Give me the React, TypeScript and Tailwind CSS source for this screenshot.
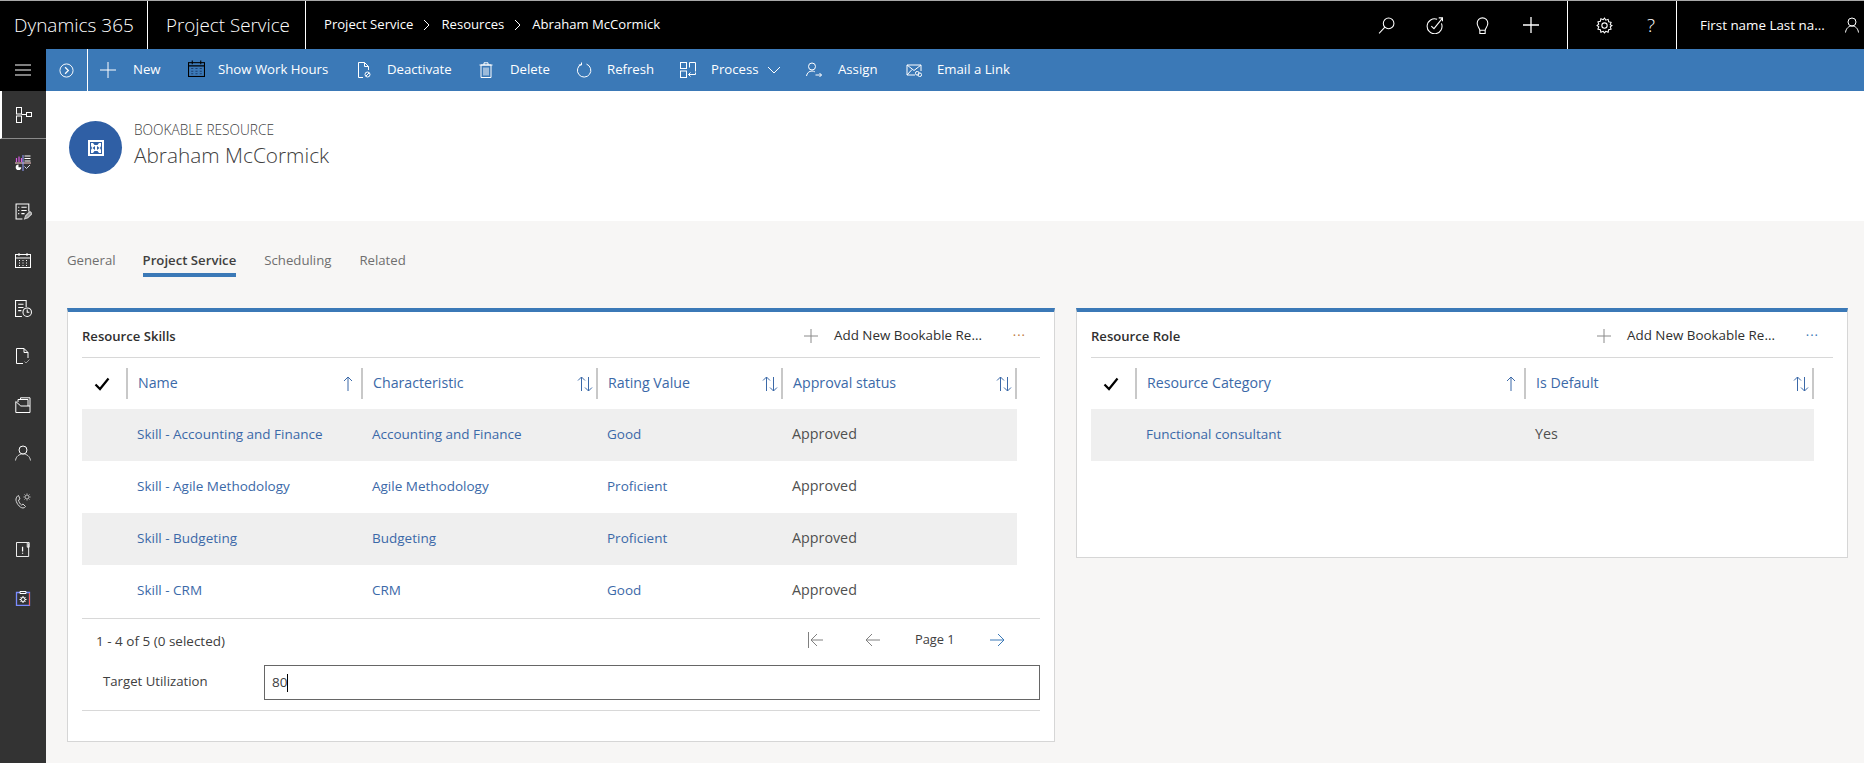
import type { ReactNode } from 'react';

function Svg({ size = 16, className = '', children }: { size?: number; className?: string; children: ReactNode }) {
  return (
    <svg width={size} height={size} viewBox="0 0 16 16" fill="none" stroke="currentColor" strokeWidth="1" className={className}>
      {children}
    </svg>
  );
}

const sideIcons: ReactNode[] = [
  <Svg><rect x="0.5" y="0.5" width="5" height="6.5" /><rect x="0.5" y="9" width="5" height="6.5" /><rect x="10.5" y="5.5" width="5" height="4" /><path d="M5.500 7.500h5" /></Svg>,
  <Svg>
    <path d="M1.500 3v4M4 1.500V7M6.500 3v4" stroke="#d65be0" strokeWidth="1.200" />
    <path d="M9.500 1h6M9.500 3.500h6M9.500 6h6" />
    <path d="M0 8h16" stroke="#ffd0d0" />
    <path d="M8 0v16" stroke="#8f9cff" />
    <path d="M3.500 9.500a2.800 2.800 0 1 0 2.800 2.800H3.500z" fill="currentColor" stroke="none" />
    <path d="M9.500 11.500l2 2 3.500-3.500" stroke="#cfd6e6" />
  </Svg>,
  <Svg size={17}><path d="M7 15H1V1h12v7" /><path d="M3 4h1M6 4h5M3 7h1M6 7h5M3 10h1M6 10h3" /><path d="M9 15l1-3 4-4 2 2-4 4z" fill="#999" stroke="#ccc" /></Svg>,
  <Svg><rect x="0.5" y="2.5" width="15" height="13" /><path d="M0.5 6h15M4 1v3M12 1v3" /><path d="M4 8.500h1M7.500 8.500h1M11 8.500h1M4 11h1M7.500 11h1M11 11h1M4 13.500h1M7.500 13.500h1M11 13.500h1" /></Svg>,
  <Svg size={17}><path d="M6.500 15.500H.5V.5h10v6" /><path d="M3 4h5M3 7h5M3 10h3" /><circle cx="11.500" cy="11.500" r="4" /><path d="M11.500 9v2.500h2" /></Svg>,
  <Svg><path d="M8 15.500H1.500V.5h7.500l4 4V10" /><path d="M9 .5V4.500h4" /><path d="M9.500 13.500l1.500 1.500 3.500-3.500" stroke="#999" /></Svg>,
  <Svg><path d="M.8 15.500V4.500l5 4.500h9.200v6.500z" /><path d="M3 5V2.500h10V9" /><path d="M5.500 2.500V.8h9.500V9" /></Svg>,
  <Svg><circle cx="8" cy="5" r="4" /><path d="M.5 15.500c.5-4 3.500-6.500 7.500-6.500s7 2.500 7.500 6.500" stroke="#cfcfcf" /></Svg>,
  <Svg><path d="M1 6c-.5 3 3.500 9 7 9 1 0 2-.5 2.500-1.500L8 11l-1.500 1C5 11 3.800 9 3.500 7L5 6 3.500 2.500C2 3 1.300 4.500 1 6z" stroke="#d8d8d8" /><circle cx="12" cy="4" r="2" stroke="#bdbdbd" /><path d="M12 .5v1M12 6.500v1M8.500 4h1M14.500 4h1M9.500 1.500l.7.7M13.800 5.800l.7.7M14.500 1.500l-.7.7M10.200 5.800l-.7.7" stroke="#bdbdbd" /></Svg>,
  <Svg size={15}><path d="M12 .5H.5v15h13V1.500" /><path d="M12 .5h2v5h-2z" /><path d="M7 5v5M7 11.500v1" strokeWidth="1.300" /></Svg>,
  <Svg>
    <path d="M5 2.500H1.500v13h13v-13H11" stroke="#7a8cff" strokeWidth="1.300" />
    <path d="M5 3.500V1.500h6v2z" stroke="#fff" />
    <path d="M14.500 3v12.500" stroke="#ff5a5a" />
    <circle cx="8" cy="9.500" r="2" />
    <path d="M8 6v1.500M8 11.500V13M4.500 9.500H6M10 9.500h1.500M5.500 7l1 1M10.500 12l-1-1M10.500 7l-1 1M5.500 12l1-1" />
  </Svg>,
];

const commands: { label: string; icon: ReactNode; box: string; gap: string }[] = [
  { label: 'New', box: 'w-[88px]', gap: 'w-[33px]', icon: <Svg size={16}><path d="M8 0v16M0 8h16" /></Svg> },
  { label: 'Show Work Hours', box: 'w-[168px]', gap: 'w-[30px] text-black -mt-[3px]', icon: <Svg size={17}><rect x=".5" y="2.500" width="15" height="13" /><path d="M.5 5.500h15M4 .5v3.500M12 .5v3.500" /><path d="M3 8h2M7 8h2M11 8h2M3 10.500h2M7 10.500h2M11 10.500h2M3 13h2M7 13h2M11 13h2" stroke="#1d3f70" /></Svg> },
  { label: 'Deactivate', box: 'w-[122px]', gap: 'w-[31px]', icon: <Svg size={16}><path d="M7 15.500H2.500V.5h6l4 4V8" /><path d="M8.500.5v4h4" /><circle cx="11.500" cy="12.500" r="2.500" /><path d="M10 14l3-3" /></Svg> },
  { label: 'Delete', box: 'w-[98px]', gap: 'w-[32px]', icon: <Svg size={16}><path d="M3 3h10v12.500H3zM1.500 3h13M6 3V.8h4V3M6 5.500v8M8 5.500v8M10 5.500v8" /></Svg> },
  { label: 'Refresh', box: 'w-[104px]', gap: 'w-[31px]', icon: <Svg size={16}><path d="M5.500 2.200a6.700 6.700 0 1 0 5-.1" /><path d="M5.500 .5v2.500H2.800" /></Svg> },
  { label: 'Process', box: 'w-[126px]', gap: 'w-[31px]', icon: <Svg size={16}><rect x=".5" y=".5" width="6" height="6" /><rect x=".5" y="9" width="6" height="6.500" /><path d="M9.500 .5h6v9" /><path d="M9.500 .5v5" /><path d="M15.500 10.500v2h-7M10.500 10.500l-2 2 2 2" /></Svg> },
  { label: 'Assign', box: 'w-[100px]', gap: 'w-[32px]', icon: <Svg size={16}><circle cx="6" cy="4.500" r="3.500" /><path d="M.5 14c.5-3 2.500-5 5.500-5 1 0 2 .3 2.800.8" /><path d="M9.500 13h6M13.500 11l2 2-2 2" /></Svg> },
  { label: 'Email a Link', box: 'w-[120px]', gap: 'w-[31px]', icon: <Svg size={16}><path d="M9 13H1V3h14v6" /><path d="M1 3l7 5.500L15 3M1 13l5-5.500" /><rect x="9.500" y="9.500" width="3.500" height="3.500" rx="1.500" /><rect x="12" y="11" width="3.500" height="3.500" rx="1.500" /></Svg> },
];

type Row = { cells: string[]; last: string };

const skills: Row[] = [
  { cells: ['Skill - Accounting and Finance', 'Accounting and Finance', 'Good'], last: 'Approved' },
  { cells: ['Skill - Agile Methodology', 'Agile Methodology', 'Proficient'], last: 'Approved' },
  { cells: ['Skill - Budgeting', 'Budgeting', 'Proficient'], last: 'Approved' },
  { cells: ['Skill - CRM', 'CRM', 'Good'], last: 'Approved' },
];

function SortBoth() {
  return (
    <svg width="16" height="16" viewBox="0 0 16 16" fill="none" stroke="currentColor" className="shrink-0">
      <path d="M4.500 15V1M1 4.500l3.500-3.500L8 4.500M11.500 1v14M8 11.500l3.500 3.500 3.500-3.500" />
    </svg>
  );
}

function SortUp() {
  return (
    <svg width="10" height="16" viewBox="0 0 10 16" fill="none" stroke="currentColor" className="shrink-0">
      <path d="M5 15V1M1 5l4-4 4 4" />
    </svg>
  );
}

function HeaderCell({ label, up, arrowGap }: { label: string; up?: boolean; arrowGap: string }) {
  return (
    <div className="h-[31px] border-r-2 border-[#c8c8c8] flex items-center pl-[10px] text-[#3b69a8] text-[14.200px]">
      <span className="-mt-[2px]">{label}</span>
      <span className={`ml-auto flex ${arrowGap}`}>{up ? <SortUp /> : <SortBoth />}</span>
    </div>
  );
}

function Check() {
  return (
    <div className="h-[31px] border-r-2 border-[#c8c8c8] flex items-center justify-center pr-[4px]">
      <svg width="16" height="14" viewBox="0 0 16 14" fill="none" stroke="#000" strokeWidth="2.200"><path d="M1.500 7.500l4.500 4.500L14.500 1.500" /></svg>
    </div>
  );
}

function CardHead({ title, dots }: { title: string; dots: string }) {
  return (
    <div className="h-[46px] pt-[2px] border-b border-[#d8d8d8] flex items-center text-[#2f2f2f] text-[13.400px]">
      <span className="mt-[2px] text-[13.100px] font-semibold">{title}</span>
      <svg width="16" height="16" viewBox="0 0 16 16" stroke="#8a8a8a" className="ml-auto"><path d="M8 1v14M1 8h14" /></svg>
      <span className="ml-[15px] w-[148px] whitespace-nowrap">Add New Bookable Re...</span>
      <span className={`w-[58px] pr-[14px] text-right text-[13px] tracking-[1px] ${dots}`}>···</span>
    </div>
  );
}

export default function App() {
  return (
    <div className="w-full h-screen overflow-hidden flex flex-col font-['Open_Sans',sans-serif] bg-[#f7f6f5]">
      {/* top bar */}
      <div className="h-[49px] shrink-0 bg-black border-t border-[#a8a8a8] text-white flex">
        <div className="w-[148px] border-r border-white pl-[14px] flex items-center text-[19px] font-light">Dynamics 365</div>
        <div className="w-[158px] border-r border-white pl-[18px] flex items-center text-[18.800px] font-light">Project Service</div>
        <div className="pl-[18px] flex items-center text-[13.100px]">
          <span>Project Service</span>
          <svg width="8" height="12" viewBox="0 0 8 12" fill="none" stroke="#fff" className="mx-[10px]"><path d="M1 1l5 5-5 5" /></svg>
          <span>Resources</span>
          <svg width="8" height="12" viewBox="0 0 8 12" fill="none" stroke="#fff" className="mx-[10px]"><path d="M1 1l5 5-5 5" /></svg>
          <span>Abraham McCormick</span>
        </div>
        <div className="ml-auto flex items-center">
          <Svg size={17} className="mr-[31px]"><circle cx="10" cy="6" r="5" /><path d="M6.500 9.500L1 15.500" /></Svg>
          <Svg size={17} className="mr-[31px]"><path d="M14.500 6a7 7 0 1 1-4-3.800" /><path d="M5 8.500l2.500 2.500L15.500 1M12 .8h3.500V4" /></Svg>
          <Svg size={17} className="mr-[32px]"><path d="M5.500 12.500C5 10 3 9 3 5.800a5 5 0 0 1 10 0C13 9 11 10 10.500 12.500z" /><path d="M5.500 12.500v3h5v-3" /></Svg>
          <Svg size={16} className="mr-[28px]"><path d="M8 0v16M0 8h16" strokeWidth="1.300" /></Svg>
        </div>
        <div className="w-[110px] border-x border-white flex items-center pl-[28px]">
          <Svg size={17}><circle cx="8" cy="8" r="2.500" /><path d="M8 1l1.200 2 2.200-.8.5 2.300 2.300.5-.8 2.200L15 8l-1.600 1.300.8 2.200-2.300.5-.5 2.300-2.200-.8L8 15l-1.200-1.500-2.200.8-.5-2.300-2.300-.5.8-2.200L1 8l1.600-1.300-.8-2.200 2.300-.5.5-2.300 2.200.8z" /></Svg>
          <span className="ml-[34px] text-[19px] font-light leading-none">?</span>
        </div>
        <div className="w-[187px] pl-[23px] flex items-center text-[13.400px]">
          <span>First name Last na...</span>
          <Svg size={16} className="ml-[19px]"><circle cx="8" cy="5" r="4" /><path d="M1.500 15.500c.5-4 3-6.500 6.500-6.500s6 2.500 6.500 6.500" /></Svg>
        </div>
      </div>

      {/* command bar */}
      <div className="h-[42px] shrink-0 flex bg-[#3b79b7] text-white text-[13.200px]">
        <div className="w-[46px] bg-black flex items-center justify-center">
          <svg width="18" height="14" viewBox="0 0 18 14" stroke="#fff"><path d="M1 2h16M1 7h16M1 12h16" /></svg>
        </div>
        <div className="w-[42px] mr-[12px] border-r border-white flex items-center justify-center">
          <Svg size={15}><circle cx="8" cy="8" r="7" /><path d="M6.500 4.500L10 8l-3.500 3.500" strokeWidth="1.300" /></Svg>
        </div>
        {commands.map((c) => (
          <div key={c.label} className={`flex items-center shrink-0 ${c.box}`}>
            <span className={`flex shrink-0 ${c.gap}`}>{c.icon}</span>
            <span className="text-white font-medium">{c.label}</span>
            {c.label === 'Process' && (
              <svg width="14" height="8" viewBox="0 0 14 8" fill="none" stroke="#fff" className="ml-[8px]"><path d="M1 1l6 6 6-6" /></svg>
            )}
          </div>
        ))}
      </div>

      <div className="flex-1 flex min-h-0">
        {/* sidebar */}
        <div className="w-[46px] shrink-0 bg-[#333333] text-white flex flex-col">
          {sideIcons.map((icon, i) => (
            <div
              key={i}
              className={i === 0 ? 'h-[48px] shrink-0 flex items-center justify-center border-l-2 border-white border-b border-b-[#8a8a8a]' : 'h-[48.300px] shrink-0 flex items-center justify-center'}
            >
              {icon}
            </div>
          ))}
        </div>

        <div className="flex-1 min-w-0">
          {/* record header */}
          <div className="h-[130px] bg-white pl-[23px] pt-[30px] flex items-start">
            <div className="w-[53px] h-[53px] rounded-full bg-[#2f5fa5] flex items-center justify-center">
              <svg width="16" height="16" viewBox="0 0 16 16">
                <rect width="16" height="16" fill="#fff" />
                <path d="M2 2h12v12H2z" fill="#2f5fa5" />
                <path d="M3 3h2l1.500 2h3L11 3h2v3l-1 2 1 2v3h-2L9.500 11h-3L5 13H3v-3l1-2-1-2z" fill="#fff" />
                <path d="M4.500 8L7 6v4zM11.500 8L9 6v4z" fill="#2f5fa5" />
              </svg>
            </div>
            <div className="ml-[12px]">
              <div className="text-[13.700px] text-[#404040] leading-[18px] font-light">BOOKABLE RESOURCE</div>
              <div className="text-[20.800px] text-[#404040] leading-[30px] mt-[1px] font-light">Abraham McCormick</div>
            </div>
          </div>

          {/* tabs */}
          <div className="h-[87px] pl-[21px] pt-[30px] flex gap-[28px] text-[13.200px] text-[#6f6f6f]">
            <span className="h-[26px] -mr-[1px]">General</span>
            <span className="h-[26px] text-[#404040] font-semibold border-b-4 border-[#3b79b7]">Project Service</span>
            <span className="h-[26px]">Scheduling</span>
            <span className="h-[26px]">Related</span>
          </div>

          <div className="flex items-start gap-[21px] pl-[21px]">
            {/* resource skills */}
            <div className="w-[988px] h-[434px] shrink-0 bg-white border border-[#d6d6d6] border-t-4 border-t-[#3b79b7] px-[14px]">
              <CardHead title="Resource Skills" dots="text-[#c07a3a]" />
              <div className="grid grid-cols-[46px_235px_235px_185px_234px] w-[935px] mt-[10px]">
                <Check />
                <HeaderCell label="Name" up arrowGap="mr-[8px]" />
                <HeaderCell label="Characteristic" arrowGap="mr-[3px]" />
                <HeaderCell label="Rating Value" arrowGap="mr-[3px]" />
                <HeaderCell label="Approval status" arrowGap="mr-[3px]" />
              </div>
              <div className="mt-[10px] w-[935px] text-[13.500px] text-[#3b69a8]">
                {skills.map((r, i) => (
                  <div key={r.cells[0]} className={`h-[52px] grid grid-cols-[45px_235px_235px_185px_235px] items-center pb-[2px] ${i % 2 === 0 ? 'bg-[#efefef]' : ''}`}>
                    <span />
                    {r.cells.map((c) => <span key={c} className="pl-[10px]">{c}</span>)}
                    <span className="pl-[10px] text-[#505050] text-[14.300px]">{r.last}</span>
                  </div>
                ))}
              </div>
              <div className="border-t border-[#d8d8d8] mt-[1px] h-[47px] flex items-center text-[13.500px] text-[#404040]">
                <span className="ml-[14px] -mt-[1px]">1 - 4 of 5 (0 selected)</span>
                <span className="ml-auto flex items-center mr-[35px] -mt-[5px]">
                  <svg width="16" height="16" viewBox="0 0 16 16" fill="none" stroke="#808080"><path d="M.5 0v16M15 8H3M9 2L3 8l6 6" /></svg>
                  <svg width="15" height="16" viewBox="0 0 15 16" fill="none" stroke="#808080" className="ml-[41px]"><path d="M15 8H1M7 2L1 8l6 6" /></svg>
                  <span className="ml-[35px] w-[40px] whitespace-nowrap text-[12.800px]">Page 1</span>
                  <svg width="15" height="16" viewBox="0 0 15 16" fill="none" stroke="#3b79b7" className="ml-[35px]"><path d="M0 8h14M8 2l6 6-6 6" /></svg>
                </span>
              </div>
              <div className="h-[35px] flex items-center text-[13.200px] text-[#404040]">
                <span className="w-[182px] pl-[21px] -mt-[2px]">Target Utilization</span>
                <div className="flex-1 h-[35px] border border-[#666666] flex items-center pl-[7px] text-[13.500px]">
                  80<span className="w-[1px] h-[18px] bg-black" />
                </div>
              </div>
              <div className="border-t border-[#d8d8d8] mt-[10px]" />
            </div>

            {/* resource role */}
            <div className="w-[772px] h-[250px] shrink-0 bg-white border border-[#d6d6d6] border-t-4 border-t-[#3b79b7] px-[14px]">
              <CardHead title="Resource Role" dots="text-[#3b79b7]" />
              <div className="grid grid-cols-[46px_389px_288px] w-[723px] mt-[10px]">
                <Check />
                <HeaderCell label="Resource Category" up arrowGap="mr-[8px]" />
                <HeaderCell label="Is Default" arrowGap="mr-[3px]" />
              </div>
              <div className="mt-[10px] w-[723px] h-[52px] pb-[2px] bg-[#efefef] grid grid-cols-[45px_389px_289px] items-center text-[13.500px] text-[#3b69a8]">
                <span />
                <span className="pl-[10px]">Functional consultant</span>
                <span className="pl-[10px] text-[#505050] text-[14.300px]">Yes</span>
              </div>
            </div>
          </div>
        </div>
      </div>
    </div>
  );
}
